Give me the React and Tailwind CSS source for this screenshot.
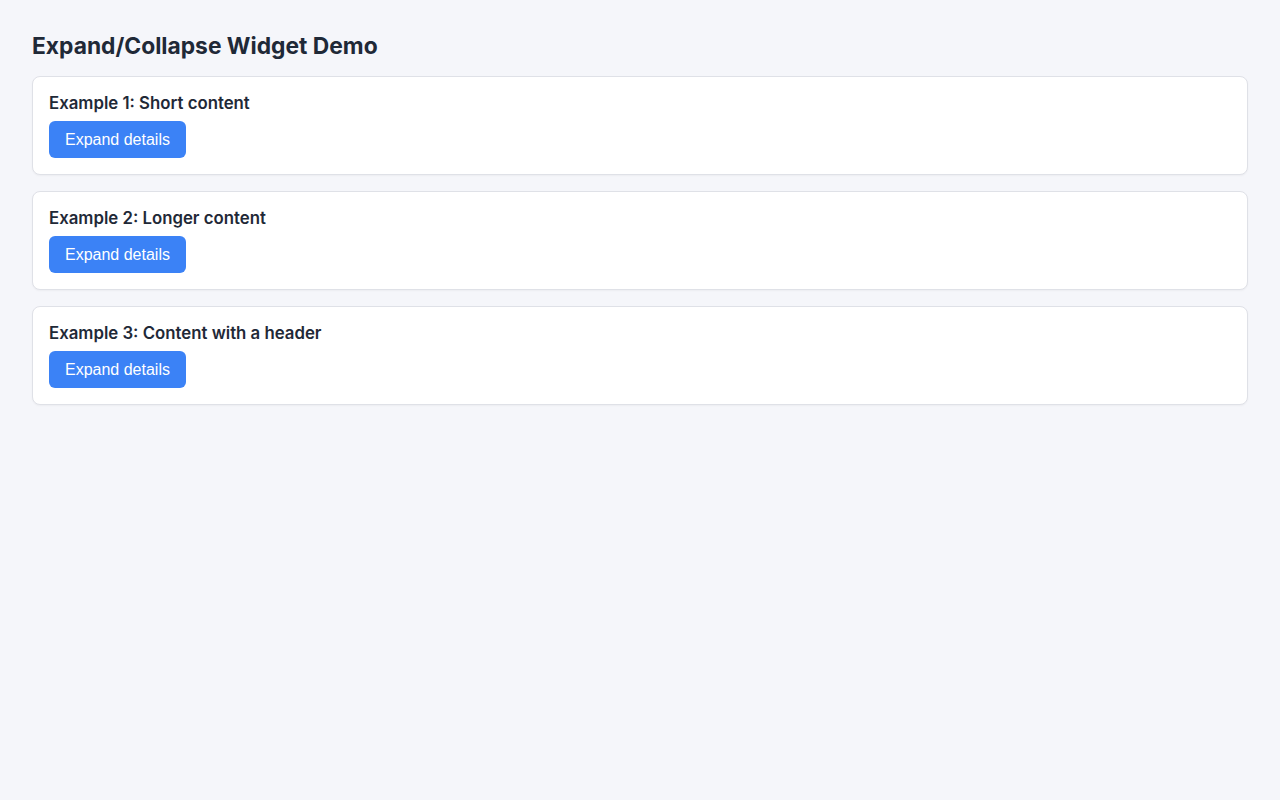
import { useState } from "react";

const examples = [
  { id: 1, title: "Example 1: Short content", body: "This is a short piece of content." },
  { id: 2, title: "Example 2: Longer content", body: "This is a longer piece of content that takes up more room once expanded." },
  { id: 3, title: "Example 3: Content with a header", body: "Header and content." },
];

function ExpandCard({ title, body }) {
  const [open, setOpen] = useState(false);
  return (
    <div className="bg-white border border-[#dfe1e7] rounded-lg p-4 shadow-[0_1px_2px_rgba(0,0,0,0.04)]">
      <h2 className="text-[16.8px] leading-5 font-semibold text-[#1f2937] mb-2">{title}</h2>
      <button
        onClick={() => setOpen(!open)}
        className="h-[37px] px-4 rounded-md bg-[#3b82f6] text-white text-base font-['Liberation_Sans',Arial,sans-serif]"
      >
        {open ? "Collapse details" : "Expand details"}
      </button>
      {open && <p className="mt-3 text-sm text-slate-600">{body}</p>}
    </div>
  );
}

export default function App() {
  return (
    <div className="min-h-screen bg-[#f5f6fa] p-8 font-['Inter',sans-serif]">
      <h1 className="text-[22.8px] leading-7 font-bold text-[#1f2937] mb-4">Expand/Collapse Widget Demo</h1>
      <div className="flex flex-col gap-4">
        {examples.map(ex => (
          <ExpandCard key={ex.id} title={ex.title} body={ex.body} />
        ))}
      </div>
    </div>
  );
}
